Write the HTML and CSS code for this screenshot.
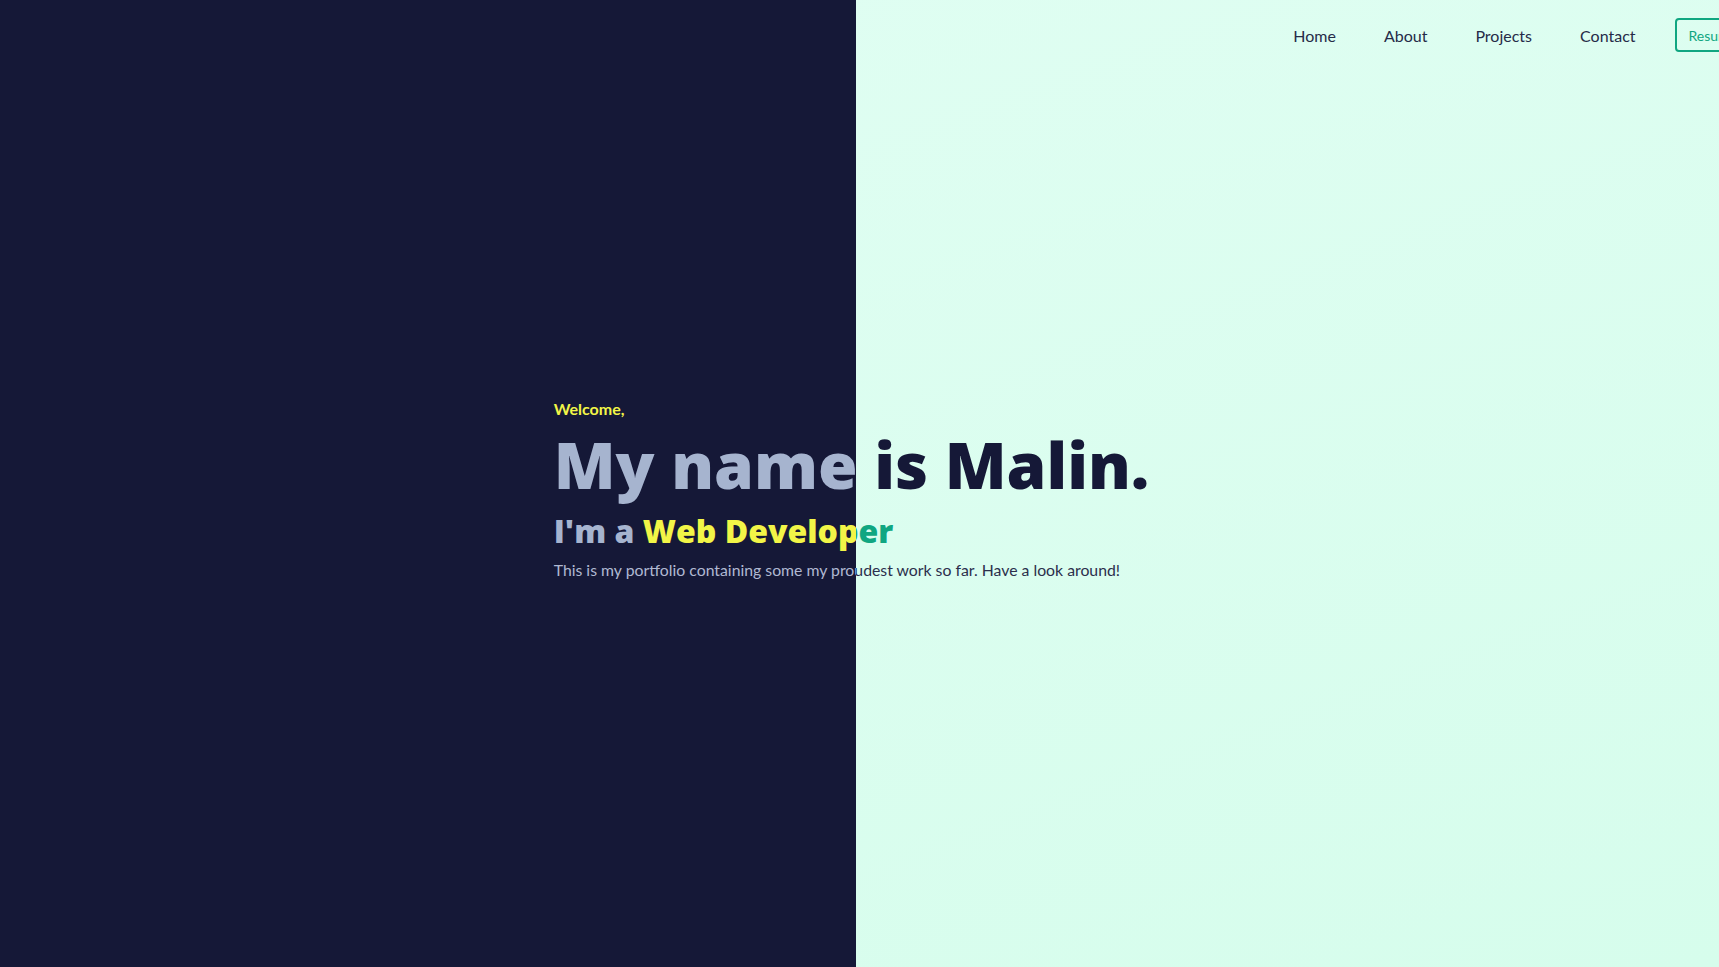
FILE: index.html
```html
<!DOCTYPE html>
<html lang="en">
<head>
<meta charset="utf-8">
<title>Malin - Portfolio</title>
<link rel="stylesheet" href="styles.css">
</head>
<body>
<div class="stage">
  <div class="layer layer-dark">
    <section class="hero">
      <p class="welcome">Welcome,</p>
      <h1 class="name">My name is Malin.</h1>
      <h2 class="role">I'm a <span class="role-hl">Web Developer</span></h2>
      <p class="intro">This is my portfolio containing some my proudest work so far. Have a look around!</p>
    </section>
  </div>
  <div class="layer layer-light">
    <section class="hero">
      <p class="welcome">Welcome,</p>
      <h1 class="name">My name is Malin.</h1>
      <h2 class="role">I'm a <span class="role-hl">Web Developer</span></h2>
      <p class="intro">This is my portfolio containing some my proudest work so far. Have a look around!</p>
    </section>
  </div>
  <header class="topbar">
    <nav class="nav">
      <a class="nav-link" href="#">Home</a>
      <a class="nav-link" href="#">About</a>
      <a class="nav-link" href="#">Projects</a>
      <a class="nav-link" href="#">Contact</a>
      <a class="resume-btn" href="#">Resume</a>
    </nav>
  </header>
</div>
</body>
</html>
```

FILE: styles.css
```css
* { box-sizing: border-box; }
html, body {
  margin: 0;
  padding: 0;
  overflow: hidden;
}
body {
  font-family: "Lato", "Liberation Sans", sans-serif;
  background: #151837;
}
.stage {
  display: grid;
  width: 100vw;
  height: 100vh;
}
.layer {
  grid-area: 1 / 1;
  display: flex;
  align-items: center;
  justify-content: center;
  width: 100%;
  height: 100%;
}
.layer-dark {
  background: #151837;
  clip-path: inset(0 calc(100% - 856px) 0 0);
}
.layer-light {
  background: linear-gradient(160deg, #e1fef3 0%, #d6fdec 100%);
  clip-path: inset(0 0 0 856px);
}
.hero {
  width: max-content;
  padding-top: 13px;
  margin-right: 16px;
}
.welcome {
  margin: 0;
  font-family: "Lato", sans-serif;
  font-weight: 700;
  font-size: 16px;
  line-height: 20px;
}
.name {
  margin: 8px 0 0;
  font-family: "Open Sans", sans-serif;
  font-weight: 800;
  font-size: 64px;
  line-height: 76px;
  letter-spacing: 0;
}
.role {
  margin: 8px 0 0;
  font-family: "Open Sans", sans-serif;
  font-weight: 800;
  font-size: 32px;
  line-height: 40px;
}
.intro {
  margin: 7px 0 0;
  font-family: "Lato", sans-serif;
  font-size: 15.8px;
  line-height: 24px;
}
.layer-dark .welcome { color: #f2f547; }
.layer-dark .name { color: #a6b4cf; }
.layer-dark .role { color: #a6b4cf; }
.layer-dark .role-hl { color: #f2f547; }
.layer-dark .intro { color: #b0b8d2; }
.layer-light .welcome { color: #0fa47f; }
.layer-light .name { color: #151837; }
.layer-light .role { color: #151837; }
.layer-light .role-hl { color: #10a681; }
.layer-light .intro { color: #2b2f4c; }

.topbar {
  grid-area: 1 / 1;
  align-self: start;
  justify-self: end;
  position: relative;
  z-index: 1;
  padding-top: 18px;
  margin-right: -32px;
}
.nav {
  display: flex;
  align-items: center;
}
.nav-link {
  font-family: "Lato", sans-serif;
  font-size: 16px;
  color: #262b48;
  text-decoration: none;
  margin: 0 24px;
}
.resume-btn {
  margin-left: 15px;
  display: inline-flex;
  align-items: center;
  height: 34px;
  padding: 0 12px;
  border: 2px solid #10a681;
  border-radius: 4px;
  color: #10a681;
  font-family: "Lato", sans-serif;
  font-size: 14px;
  text-decoration: none;
}
```
